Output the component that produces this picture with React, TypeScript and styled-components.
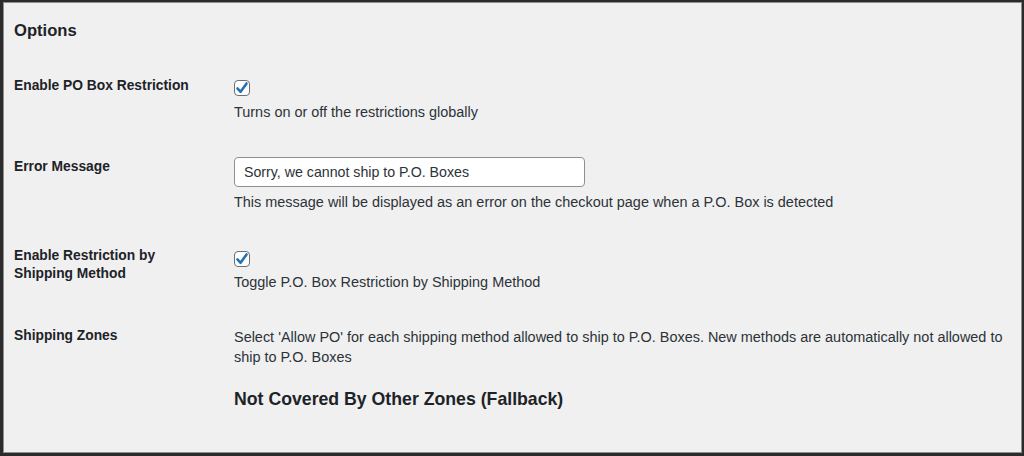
import styled, { createGlobalStyle } from 'styled-components';

const GlobalStyle = createGlobalStyle`
  html, body {
    margin: 0;
    padding: 0;
    background: #f0f0f1;
  }
  * {
    box-sizing: border-box;
  }
`;

const Frame = styled.div`
  position: relative;
  width: 1024px;
  height: 456px;
  overflow: hidden;
  background: #f0f0f1;
  border: 2px solid #2b2b2b;
  border-left-width: 3px;
  border-bottom-width: 3px;
  box-shadow: inset 0 0 0 1px #8f8f8f;
  font-family: 'Liberation Sans', Arial, sans-serif;
  color: #1d2327;
  padding: 18px 14px 0 11px;
  display: flex;
  flex-direction: column;
  gap: 35px;
`;

const CutLine = styled.div`
  position: absolute;
  top: -2px;
  left: 0;
  right: 0;
  height: 3px;
  overflow: hidden;
`;

const CutLink = styled.span`
  position: absolute;
  top: 0;
  left: 159px;
  width: 122px;
  height: 2px;
  background: #2271b1;
`;

const CutDot = styled.span`
  position: absolute;
  top: 0;
  left: ${(p: { x: number }) => p.x}px;
  width: 3px;
  height: 1px;
  background: #777;
`;

const SectionTitle = styled.h2`
  margin: 0;
  font-size: 16.6px;
  line-height: 22px;
  font-weight: 700;
  color: #1d2327;
`;

const Row = styled.div`
  display: grid;
  grid-template-columns: 220px 1fr;
  align-items: start;
`;

const Label = styled.div<{ offset?: number }>`
  font-size: 13.8px;
  line-height: 18px;
  font-weight: 700;
  color: #1d2327;
  margin-top: ${(p) => p.offset ?? 0}px;
`;

const Field = styled.div`
  display: flex;
  flex-direction: column;
  align-items: flex-start;
`;

const CheckBox = styled.span<{ offset?: number }>`
  display: inline-flex;
  align-items: center;
  justify-content: center;
  width: 16px;
  height: 16px;
  margin-top: ${(p) => p.offset ?? 0}px;
  border: 1px solid #6c7075;
  border-radius: 4px;
  background: #fff;
`;

const TextInput = styled.input`
  width: 351px;
  height: 30px;
  padding: 0 9px;
  border: 1px solid #8c8f94;
  border-radius: 4px;
  background: #fff;
  font-family: 'Liberation Sans', Arial, sans-serif;
  font-size: 14.2px;
  color: #2c3338;
  outline: none;
`;

const Description = styled.p<{ gap?: number }>`
  margin: ${(p) => p.gap ?? 6}px 0 0;
  font-size: 14.45px;
  line-height: 20px;
  color: #2c3338;
  max-width: 780px;
`;

const ZoneTitle = styled.h3`
  margin: 20px 0 0;
  font-size: 17.7px;
  line-height: 24px;
  font-weight: 700;
  color: #1d2327;
`;

const Check = () => (
  <svg width="14" height="14" viewBox="0 0 20 20">
    <path
      d="M3.5 10.5 L8 15.5 L16.5 3.5"
      fill="none"
      stroke="#2271b1"
      strokeWidth="3.6"
      strokeLinecap="round"
      strokeLinejoin="round"
    />
  </svg>
);

export default function App() {
  return (
    <>
      <GlobalStyle />
      <Frame>
        <CutLine>
          <CutDot x={108} />
          <CutDot x={117} />
          <CutLink />
        </CutLine>

        <SectionTitle>Options</SectionTitle>

        <Row>
          <Label>Enable PO Box Restriction</Label>
          <Field>
            <CheckBox offset={3}>
              <Check />
            </CheckBox>
            <Description>Turns on or off the restrictions globally</Description>
          </Field>
        </Row>

        <Row>
          <Label offset={1}>Error Message</Label>
          <Field>
            <TextInput defaultValue="Sorry, we cannot ship to P.O. Boxes" />
            <Description gap={5}>
              This message will be displayed as an error on the checkout page when a P.O. Box is detected
            </Description>
          </Field>
        </Row>

        <Row>
          <Label>
            Enable Restriction by
            <br />
            Shipping Method
          </Label>
          <Field>
            <CheckBox offset={4}>
              <Check />
            </CheckBox>
            <Description gap={5}>Toggle P.O. Box Restriction by Shipping Method</Description>
          </Field>
        </Row>

        <Row>
          <Label>Shipping Zones</Label>
          <Field>
            <Description gap={0}>
              Select 'Allow PO' for each shipping method allowed to ship to P.O. Boxes. New methods are
              automatically not allowed to ship to P.O. Boxes
            </Description>
            <ZoneTitle>Not Covered By Other Zones (Fallback)</ZoneTitle>
          </Field>
        </Row>
      </Frame>
    </>
  );
}
